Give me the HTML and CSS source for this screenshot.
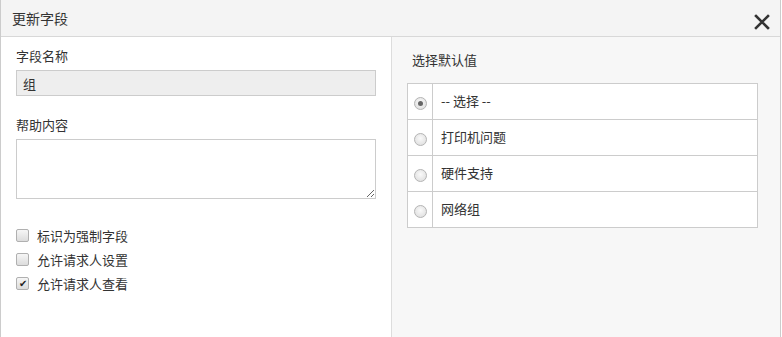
FILE: index.html
```html
<!DOCTYPE html>
<html lang="zh-CN">
<head>
  <meta charset="UTF-8">
  <title>更新字段</title>
  <link rel="stylesheet" href="styles.css">
</head>
<body>
  <div class="dialog">
    <div class="dialog-header">
      <span class="dialog-title">更新字段</span>
      <button type="button" class="close">
        <svg width="16" height="16" viewBox="0 0 16 16">
          <path d="M2 2 L14 14 M14 2 L2 14" stroke="#333" stroke-width="2.6" stroke-linecap="square" fill="none"/>
        </svg>
      </button>
    </div>
    <div class="dialog-body">
      <div class="col-left">
        <label class="field-label">字段名称</label>
        <input type="text" class="text-input" value="组" readonly>

        <label class="field-label help-label">帮助内容</label>
        <textarea class="text-area"></textarea>

        <div class="checks">
          <label class="check-row"><span class="checkbox"></span>标识为强制字段</label>
          <label class="check-row"><span class="checkbox"></span>允许请求人设置</label>
          <label class="check-row"><span class="checkbox checked">&#10004;</span>允许请求人查看</label>
        </div>
      </div>
      <div class="col-right">
        <div class="field-label">选择默认值</div>
        <table class="options">
          <tr><td class="radio-cell"><span class="radio selected"></span></td><td>-- 选择 --</td></tr>
          <tr><td class="radio-cell"><span class="radio"></span></td><td>打印机问题</td></tr>
          <tr><td class="radio-cell"><span class="radio"></span></td><td>硬件支持</td></tr>
          <tr><td class="radio-cell"><span class="radio"></span></td><td>网络组</td></tr>
        </table>
      </div>
    </div>
  </div>
</body>
</html>
```

FILE: styles.css
```css
body {
  margin: 0;
  font-family: "Noto Sans CJK SC", "Liberation Sans", sans-serif;
  font-size: 13px;
  color: #333;
  background: #fff;
}
.dialog {
  width: 781px;
  height: 337px;
  box-sizing: border-box;
  border-left: 1px solid #ccc;
  border-right: 1px solid #ccc;
  display: flex;
  flex-direction: column;
}
.dialog-header {
  height: 36px;
  background: #f4f4f4;
  border-bottom: 1px solid #d8d8d8;
  display: flex;
  align-items: center;
  justify-content: space-between;
  padding: 0 10px 0 11px;
}
.dialog-title {
  font-size: 14px;
  color: #333;
}
.close {
  border: none;
  background: none;
  padding: 0;
  margin-top: 8px;
  width: 16px;
  height: 16px;
  cursor: pointer;
}
.close svg {
  display: block;
}
.dialog-body {
  flex: 1;
  display: flex;
}
.col-left {
  width: 375px;
  padding: 9px 0 0 15px;
  border-right: 1px solid #ddd;
  display: flex;
  flex-direction: column;
}
.col-right {
  flex: 1;
  background: #f7f7f7;
  padding: 13px 0 0 15px;
}
.field-label {
  display: block;
  line-height: 20px;
  margin-bottom: 4px;
}
.col-right .field-label {
  margin-bottom: 13px;
  padding-left: 5px;
}
.help-label {
  margin-top: 19px;
}
.text-input {
  width: 360px;
  height: 26px;
  box-sizing: border-box;
  border: 1px solid #ccc;
  background: #eee;
  padding: 0 6px;
  font: inherit;
  color: #333;
  outline: none;
}
.text-area {
  width: 360px;
  height: 60px;
  box-sizing: border-box;
  border: 1px solid #ccc;
  background: #fff;
  margin: 0;
  display: block;
  font: inherit;
}
.checks {
  margin-top: 24px;
}
.check-row {
  display: flex;
  align-items: center;
  height: 24px;
}
.checkbox {
  width: 11px;
  height: 11px;
  border: 1px solid #b0b0b0;
  border-radius: 2px;
  background: linear-gradient(#f6f6f6, #dcdcdc);
  margin-right: 8px;
  display: flex;
  align-items: center;
  justify-content: center;
  font-size: 10px;
  line-height: 1;
  color: #222;
}
.options {
  width: 351px;
  border-collapse: collapse;
  background: #fff;
}
.options td {
  border: 1px solid #ccc;
  height: 33px;
  padding: 0 0 2px 8px;
}
.options td.radio-cell {
  width: 24px;
  padding: 0;
  text-align: center;
}
.radio {
  display: inline-block;
  vertical-align: middle;
  width: 11px;
  height: 11px;
  border: 1px solid #b5b5b5;
  border-radius: 50%;
  background: radial-gradient(circle at 50% 40%, #fafafa, #dadada);
  position: relative;
}
.radio.selected::after {
  content: "";
  position: absolute;
  left: 3px;
  top: 3px;
  width: 5px;
  height: 5px;
  border-radius: 50%;
  background: #666;
}
```
